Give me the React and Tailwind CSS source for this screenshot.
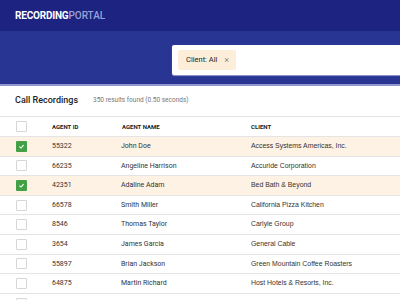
import React from "react";

const rows = [
  { id: "55322", name: "John Doe", client: "Access Systems Americas, Inc.", checked: true },
  { id: "66235", name: "Angeline Harrison", client: "Accuride Corporation" },
  { id: "42351", name: "Adaline Adam", client: "Bed Bath & Beyond", checked: true },
  { id: "66578", name: "Smith Miller", client: "California Pizza Kitchen" },
  { id: "8546", name: "Thomas Taylor", client: "Carlyle Group" },
  { id: "3654", name: "James Garcia", client: "General Cable" },
  { id: "55897", name: "Brian Jackson", client: "Green Mountain Coffee Roasters" },
  { id: "64875", name: "Martin Richard", client: "Host Hotels & Resorts, Inc." },
  { id: "", name: "", client: "" },
];

function Check({ checked }) {
  if (checked) {
    return (
      <div className="w-[11px] h-[11px] rounded-[1px] bg-[#43a047] flex items-center justify-center">
        <svg width="7" height="7" viewBox="0 0 10 10">
          <path d="M2 5.2 L4.2 7.2 L8 3" stroke="white" strokeWidth="1.6" fill="none" />
        </svg>
      </div>
    );
  }
  return <div className="w-[11px] h-[11px] rounded-[1px] border border-[#d6d6d6] bg-white" />;
}

export default function App() {
  return (
    <div className="w-[400px] h-[300px] overflow-hidden bg-white font-['Roboto',sans-serif]">
      <div className="h-[31px] bg-[#1c2381] flex items-center pl-[15px]">
        <span className="text-[10px] font-bold text-white tracking-[-0.2px]">RECORDING</span>
        <span className="text-[10px] font-medium text-[#9aa1d6]">PORTAL</span>
      </div>
      <div className="h-[55px] bg-[#283593] border-b-2 border-[#8e96cc] pt-[14px] pl-[172px]">
        <div className="h-[30px] bg-white rounded-l-[2px] shadow-[0_1px_1px_rgba(255,255,255,0.5)] flex items-center pl-[6px]">
          <div className="h-[20px] w-[58px] bg-[#fdeeda] rounded-[1px] flex items-center pl-[8px] text-[7.5px] text-[#222]">
            <span>Client: All</span>
            <span className="ml-[7px] text-[#888] text-[9px] leading-none">×</span>
          </div>
        </div>
      </div>
      <div className="h-[31px] flex items-center pl-[15px] border-b border-[#e4e4e4]">
        <span className="text-[9px] font-medium text-[#222]">Call Recordings</span>
        <span className="ml-[15px] text-[6.5px] text-[#777]">350 results found (0.50 seconds)</span>
      </div>
      <div className="h-[20px] flex items-center border-b border-[#e4e4e4] text-[6px] font-bold text-[#222]">
        <div className="w-[52px] pl-[16px]"><Check /></div>
        <div className="w-[70px]">AGENT ID</div>
        <div className="w-[129px]">AGENT NAME</div>
        <div>CLIENT</div>
      </div>
      {rows.map((r, i) => (
        <div
          key={i}
          className={`h-[19.6px] flex items-center border-b border-[#e4e4e4] text-[7px] text-[#333] ${r.checked ? "bg-[#fdf2e4]" : "bg-white"}`}
        >
          <div className="w-[52px] pl-[16px]"><Check checked={r.checked} /></div>
          <div className="w-[69px]">{r.id}</div>
          <div className="w-[130px]">{r.name}</div>
          <div className="font-['Liberation_Sans',sans-serif] text-[6.9px]">{r.client}</div>
        </div>
      ))}
    </div>
  );
}
